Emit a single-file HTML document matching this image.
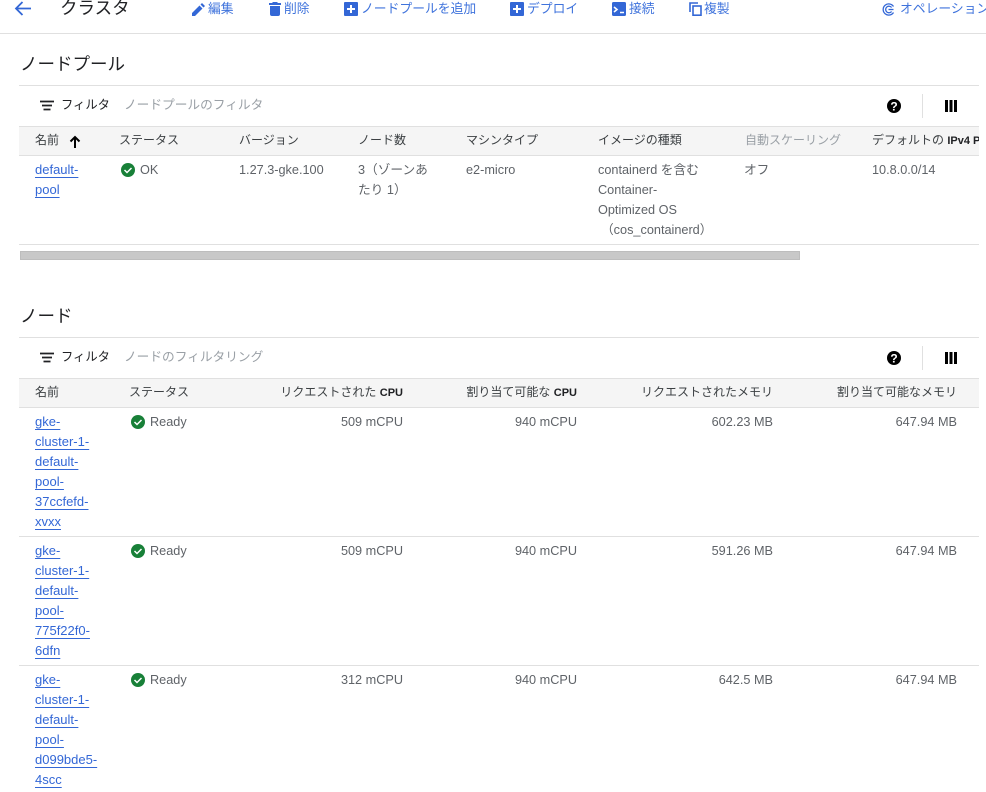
<!DOCTYPE html>
<html lang="ja"><head><meta charset="utf-8"><title>クラスタ</title>
<style>
html,body{margin:0;padding:0;background:#fff}
body{width:986px;height:792px;overflow:hidden;position:relative;font-family:"Liberation Sans","Noto Sans CJK JP",sans-serif;font-size:12.7px;color:#5f6368}
.t{position:absolute;white-space:nowrap;line-height:20px}
.r{text-align:right}
.b{color:#3f73dc;font-size:12.8px}
.h{color:#3c4043;font-size:12px}
.d{color:#202124;font-size:12.3px}
.g{color:#9aa0a6;font-size:12.7px}
.g2{color:#9aa0a6;font-size:12px}
.k{font-weight:700;color:#202124;font-size:11px}
.ti{font-size:17.5px;line-height:22px;color:#202124}
a{color:#3367d6;text-decoration:underline;text-underline-offset:3px;font-size:13px}
.l{position:absolute;height:1px;background:#e0e0e0}
.hb{position:absolute;background:#f5f5f5;border-top:1px solid #e0e0e0;border-bottom:1px solid #e0e0e0;box-sizing:border-box}
svg{position:absolute}
</style></head><body>

<svg style="left:13px;top:0" width="20" height="18" viewBox="0 0 20 18"><path d="M18 8.500H3M9.500 2L3 8.500l6.500 6.500" fill="none" stroke="#3367d6" stroke-width="1.800"/></svg>
<div class="t ti" style="left:60px;top:-3px">クラスタ</div>

<svg style="left:191px;top:2px" width="15" height="15" viewBox="0 0 15 15"><path d="M1 11v3h3l7.500-7.500-3-3zM9.500 2.500l3 3L14 4l-3-3z" fill="#3367d6"/></svg>
<div class="t b" style="left:208px;top:-1px">編集</div>
<svg style="left:268px;top:1px" width="14" height="15" viewBox="0 0 14 15"><path d="M1 2h3l1-1h4l1 1h3v2H1zM2 5h10v8a2 2 0 0 1-2 2H4a2 2 0 0 1-2-2z" fill="#3367d6"/></svg>
<div class="t b" style="left:284px;top:-1px">削除</div>
<svg style="left:344px;top:2px" width="14" height="14" viewBox="0 0 14 14"><rect width="14" height="14" rx="1" fill="#3367d6"/><path d="M7 3v8M3 7h8" stroke="#fff" stroke-width="2"/></svg>
<div class="t b" style="left:361px;top:-1px">ノードプールを追加</div>
<svg style="left:510px;top:2px" width="14" height="14" viewBox="0 0 14 14"><rect width="14" height="14" rx="1" fill="#3367d6"/><path d="M7 3v8M3 7h8" stroke="#fff" stroke-width="2"/></svg>
<div class="t b" style="left:527px;top:-1px">デプロイ</div>
<svg style="left:612px;top:2px" width="14" height="14" viewBox="0 0 14 14"><rect width="14" height="14" rx="1.500" fill="#3367d6"/><path d="M2 5l3 2.500L2 10M8 10.500h4" fill="none" stroke="#fff" stroke-width="1.600"/></svg>
<div class="t b" style="left:629px;top:-1px">接続</div>
<svg style="left:689px;top:2px" width="13" height="14" viewBox="0 0 13 14"><path d="M1 10V1h8" fill="none" stroke="#3367d6" stroke-width="1.600"/><rect x="4" y="4" width="8" height="9.200" fill="none" stroke="#3367d6" stroke-width="1.600"/></svg>
<div class="t b" style="left:704px;top:-1px">複製</div>
<svg style="left:882px;top:3px" width="13" height="13" viewBox="0 0 13 13"><g fill="none" stroke="#3367d6" stroke-width="1.300"><path d="M11.500 9.500A5.600 5.600 0 1 1 11.500 3.500"/><path d="M9.600 8.500A3.300 3.300 0 1 1 9.600 4.500"/><path d="M6.500 6.500h5"/></g></svg>
<div class="t b" style="left:900px;top:-1px">オペレーション</div>
<div class="l" style="left:0;top:33px;width:986px"></div>

<div class="t ti" style="left:20px;top:53px">ノードプール</div>
<div class="l" style="left:19px;top:85px;width:960px"></div>
<svg style="left:40px;top:100px" width="14" height="11" viewBox="0 0 14 11"><path d="M0 1.500h14M2 5.500h10M3.500 9.500h7" stroke="#202124" stroke-width="1.800"/></svg>
<div class="t d" style="left:61px;top:95px">フィルタ</div>
<div class="t g" style="left:124px;top:95px">ノードプールのフィルタ</div>
<svg style="left:887px;top:99px" width="14" height="14" viewBox="0 0 14 14"><circle cx="7" cy="7" r="7"/><text x="7" y="11.300" text-anchor="middle" font-size="12" font-weight="700" fill="#fff" font-family="Liberation Sans">?</text></svg>
<div class="l" style="left:922px;top:94px;width:1px;height:24px"></div>
<svg style="left:945px;top:100px" width="12" height="12" viewBox="0 0 12 12"><path d="M0 0h3v12H0zM4.500 0h3v12h-3zM9 0h3v12H9z"/></svg>

<div class="hb" style="left:19px;top:126px;width:960px;height:30px"></div>
<div class="t h" style="left:35px;top:130px">名前</div>
<svg style="left:69px;top:135px" width="12" height="13" viewBox="0 0 12 13"><path d="M6 13V2M1.500 6.500L6 2l4.500 4.500" fill="none" stroke="#000" stroke-width="2"/></svg>
<div class="t h" style="left:119px;top:130px">ステータス</div>
<div class="t h" style="left:239px;top:130px">バージョン</div>
<div class="t h" style="left:358px;top:130px">ノード数</div>
<div class="t h" style="left:466px;top:130px">マシンタイプ</div>
<div class="t h" style="left:598px;top:130px">イメージの種類</div>
<div class="t g2" style="left:745px;top:130px">自動スケーリング</div>
<div style="position:absolute;left:872px;top:130px;width:107px;height:20px;overflow:hidden"><div class="t h" style="left:0;top:0">デフォルトの <span class="k">IPv4 Pod</span></div></div>

<div class="t" style="left:35px;top:160px"><a href="#">default-</a><br><a href="#">pool</a></div>
<svg style="left:121px;top:163px" width="14" height="14" viewBox="0 0 14 14"><circle cx="7" cy="7" r="7" fill="#188038"/><path d="M3.500 7l2.500 2.500 4.500-4.500" fill="none" stroke="#fff" stroke-width="1.500"/></svg>
<div class="t" style="left:140px;top:160px">OK</div>
<div class="t" style="left:239px;top:160px">1.27.3-gke.100</div>
<div class="t" style="left:358px;top:160px">3（ゾーンあ<br>たり 1）</div>
<div class="t" style="left:466px;top:160px">e2-micro</div>
<div class="t" style="left:598px;top:160px">containerd を含む<br>Container-<br>Optimized OS<br><span style="margin-left:3px">（cos_containerd）</span></div>
<div class="t" style="left:744px;top:160px">オフ</div>
<div class="t" style="left:872px;top:160px">10.8.0.0/14</div>
<div class="l" style="left:19px;top:244px;width:960px"></div>
<div style="position:absolute;left:20px;top:251px;width:780px;height:9px;background:#c8c8c8;box-shadow:inset 0 0 0 1px #bdbdbd"></div>

<div class="t ti" style="left:20px;top:305px">ノード</div>
<div class="l" style="left:19px;top:337px;width:960px"></div>
<svg style="left:40px;top:352px" width="14" height="11" viewBox="0 0 14 11"><path d="M0 1.500h14M2 5.500h10M3.500 9.500h7" stroke="#202124" stroke-width="1.800"/></svg>
<div class="t d" style="left:61px;top:347px">フィルタ</div>
<div class="t g" style="left:124px;top:347px">ノードのフィルタリング</div>
<svg style="left:887px;top:351px" width="14" height="14" viewBox="0 0 14 14"><circle cx="7" cy="7" r="7"/><text x="7" y="11.300" text-anchor="middle" font-size="12" font-weight="700" fill="#fff" font-family="Liberation Sans">?</text></svg>
<div class="l" style="left:922px;top:346px;width:1px;height:24px"></div>
<svg style="left:945px;top:352px" width="12" height="12" viewBox="0 0 12 12"><path d="M0 0h3v12H0zM4.500 0h3v12h-3zM9 0h3v12H9z"/></svg>

<div class="hb" style="left:19px;top:378px;width:960px;height:30px"></div>
<div class="t h" style="left:35px;top:382px">名前</div>
<div class="t h" style="left:129px;top:382px">ステータス</div>
<div class="t h r" style="right:583px;top:382px">リクエストされた <span class="k">CPU</span></div>
<div class="t h r" style="right:409px;top:382px">割り当て可能な <span class="k">CPU</span></div>
<div class="t h r" style="right:213px;top:382px">リクエストされたメモリ</div>
<div class="t h r" style="right:29px;top:382px">割り当て可能なメモリ</div>

<div class="t" style="left:35px;top:412px"><a href="#">gke-</a><br><a href="#">cluster-1-</a><br><a href="#">default-</a><br><a href="#">pool-</a><br><a href="#">37ccfefd-</a><br><a href="#">xvxx</a></div>
<svg style="left:131px;top:415px" width="14" height="14" viewBox="0 0 14 14"><circle cx="7" cy="7" r="7" fill="#188038"/><path d="M3.500 7l2.500 2.500 4.500-4.500" fill="none" stroke="#fff" stroke-width="1.500"/></svg>
<div class="t" style="left:150px;top:412px">Ready</div>
<div class="t r" style="right:583px;top:412px">509 mCPU</div>
<div class="t r" style="right:409px;top:412px">940 mCPU</div>
<div class="t r" style="right:213px;top:412px">602.23 MB</div>
<div class="t r" style="right:29px;top:412px">647.94 MB</div>
<div class="l" style="left:19px;top:536px;width:960px"></div>

<div class="t" style="left:35px;top:541px"><a href="#">gke-</a><br><a href="#">cluster-1-</a><br><a href="#">default-</a><br><a href="#">pool-</a><br><a href="#">775f22f0-</a><br><a href="#">6dfn</a></div>
<svg style="left:131px;top:544px" width="14" height="14" viewBox="0 0 14 14"><circle cx="7" cy="7" r="7" fill="#188038"/><path d="M3.500 7l2.500 2.500 4.500-4.500" fill="none" stroke="#fff" stroke-width="1.500"/></svg>
<div class="t" style="left:150px;top:541px">Ready</div>
<div class="t r" style="right:583px;top:541px">509 mCPU</div>
<div class="t r" style="right:409px;top:541px">940 mCPU</div>
<div class="t r" style="right:213px;top:541px">591.26 MB</div>
<div class="t r" style="right:29px;top:541px">647.94 MB</div>
<div class="l" style="left:19px;top:665px;width:960px"></div>

<div class="t" style="left:35px;top:670px"><a href="#">gke-</a><br><a href="#">cluster-1-</a><br><a href="#">default-</a><br><a href="#">pool-</a><br><a href="#">d099bde5-</a><br><a href="#">4scc</a></div>
<svg style="left:131px;top:673px" width="14" height="14" viewBox="0 0 14 14"><circle cx="7" cy="7" r="7" fill="#188038"/><path d="M3.500 7l2.500 2.500 4.500-4.500" fill="none" stroke="#fff" stroke-width="1.500"/></svg>
<div class="t" style="left:150px;top:670px">Ready</div>
<div class="t r" style="right:583px;top:670px">312 mCPU</div>
<div class="t r" style="right:409px;top:670px">940 mCPU</div>
<div class="t r" style="right:213px;top:670px">642.5 MB</div>
<div class="t r" style="right:29px;top:670px">647.94 MB</div>

</body></html>
